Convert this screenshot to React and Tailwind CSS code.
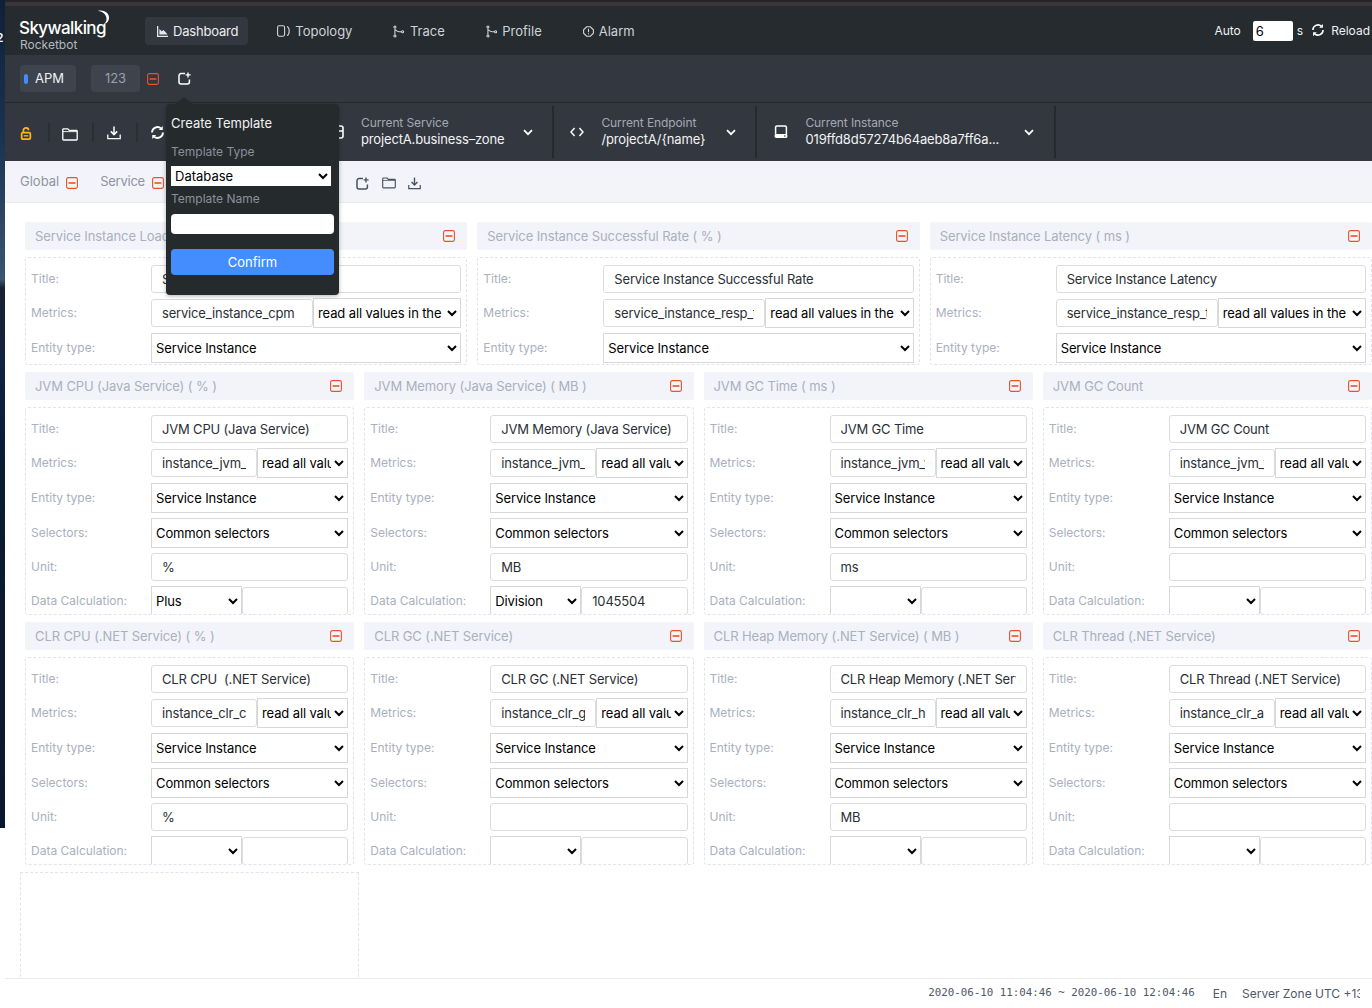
// App.jsx
import React from "react";

const ACTIVE_READ = "read all values in the duration";

function card(title, unit, inputTitle, metric, extra) {
  return { title, unit, inputTitle, metric, ...extra };
}

const TOP_CARDS = [
  { title: "Service Instance Load ( CPM )", inputTitle: "Service Instance Load", metric: "service_instance_cpm" },
  { title: "Service Instance Successful Rate ( % )", inputTitle: "Service Instance Successful Rate", metric: "service_instance_resp_time" },
  { title: "Service Instance Latency ( ms )", inputTitle: "Service Instance Latency", metric: "service_instance_resp_time" },
];

const GRID_CARDS = [
  card("JVM CPU (Java Service) ( % )", "%", "JVM CPU (Java Service)", "instance_jvm_cpu", { calc: "Plus" }),
  card("JVM Memory (Java Service) ( MB )", "MB", "JVM Memory (Java Service)", "instance_jvm_memory_heap", { calc: "Division", calcValue: "1045504" }),
  card("JVM GC Time ( ms )", "ms", "JVM GC Time", "instance_jvm_young_gc_time"),
  card("JVM GC Count", "", "JVM GC Count", "instance_jvm_young_gc_count"),
  card("CLR CPU (.NET Service) ( % )", "%", "CLR CPU  (.NET Service)", "instance_clr_cpu"),
  card("CLR GC (.NET Service)", "", "CLR GC (.NET Service)", "instance_clr_gc_count"),
  card("CLR Heap Memory (.NET Service) ( MB )", "MB", "CLR Heap Memory (.NET Service)", "instance_clr_heap_memory"),
  card("CLR Thread (.NET Service)", "", "CLR Thread (.NET Service)", "instance_clr_available_worker_threads"),
];

function DeleteIcon() {
  return (
    <svg width="12" height="12" viewBox="0 0 12 12" fill="none" className="shrink-0">
      <rect x="0.6" y="0.6" width="10.8" height="10.8" rx="1.6" stroke="#e8532b" strokeWidth="1.1" />
      <path d="M2.6 6h6.8" stroke="#e8532b" strokeWidth="1.6" />
    </svg>
  );
}

function AddIcon({ color = "#fff" }) {
  return (
    <svg width="13" height="13" viewBox="0 0 13 13" fill="none" className="shrink-0">
      <path d="M7 1.6H3A2 2 0 0 0 1 3.6v6.4a2 2 0 0 0 2 2h6.4a2 2 0 0 0 2-2V7.4" stroke={color} strokeWidth="1.5" />
      <path d="M10 .4v5M7.6 2.9h5" stroke={color} strokeWidth="1.4" />
    </svg>
  );
}

function FolderIcon({ color = "#fff", w = 16, h = 13 }) {
  return (
    <svg width={w} height={h} viewBox="0 0 16 13" fill="none" className="shrink-0">
      <path d="M.8 11.2V1.6c0-.4.3-.8.8-.8h4.2l1.5 1.6h7.1c.4 0 .8.4.8.8v8c0 .4-.4.8-.8.8H1.6a.8.8 0 0 1-.8-.8Z" stroke={color} strokeWidth="1.3" />
      <path d="M1 3.6h14" stroke={color} strokeWidth="0.9" />
    </svg>
  );
}

function DownloadIcon({ color = "#fff", size = 14 }) {
  return (
    <svg width={size} height={size} viewBox="0 0 14 14" fill="none" className="shrink-0">
      <path d="M7 .6v7.6" stroke={color} strokeWidth="1.5" />
      <path d="M3.8 5.4 7 8.6l3.2-3.2" stroke={color} strokeWidth="1.5" />
      <path d="M.8 8.6v4h12.4v-4" stroke={color} strokeWidth="1.3" />
    </svg>
  );
}

function RefreshIcon({ size = 15, stroke = 2 }) {
  return (
    <svg width={size} height={size} viewBox="0 0 16 16" fill="none" className="shrink-0">
      <path d="M2.2 8a5.8 5.8 0 0 1 9.6-4.4" stroke="#fff" strokeWidth={stroke} />
      <path d="M13.8 8a5.8 5.8 0 0 1-9.6 4.4" stroke="#fff" strokeWidth={stroke} />
      <path d="M13.6 1v4.4H9.4zM2.4 15v-4.4h4.2z" fill="#fff" />
    </svg>
  );
}

function Chevron() {
  return (
    <svg width="10" height="7" viewBox="0 0 10 7" fill="none" className="shrink-0">
      <path d="M1 1.2 5 5.2l4-4" stroke="#fff" strokeWidth="1.7" />
    </svg>
  );
}

function ChartIcon() {
  return (
    <svg width="11" height="11" viewBox="0 0 11 11" fill="#e5e7ea" className="shrink-0">
      <path d="M0 0h1.3v9.7H11V11H0z" />
      <path d="M2.4 8.6V3l2.4 2.2L6.6 4 10.6 8.6z" />
    </svg>
  );
}

function TopologyIcon() {
  return (
    <svg width="13" height="12" viewBox="0 0 13 12" fill="none" stroke="#d4d7dc" strokeWidth="1.1" className="shrink-0">
      <rect x="0.6" y="0.8" width="7" height="10.4" rx="1.6" />
      <path d="M10 1.4c1.6.6 2.2 2.4 2.2 4.6s-.6 4-2.2 4.6" />
    </svg>
  );
}

function TraceIcon() {
  return (
    <svg width="11.5" height="13" viewBox="0 0 12 13" fill="none" stroke="#d4d7dc" strokeWidth="1.1" className="shrink-0">
      <circle cx="2" cy="1.8" r="1.1" />
      <circle cx="2" cy="11.2" r="1.1" />
      <circle cx="10" cy="6.8" r="1.1" />
      <path d="M2 3v7M2.6 4.6c1 1.6 3 2.2 6.2 2.2" />
    </svg>
  );
}

function AlarmIcon() {
  return (
    <svg width="11" height="11" viewBox="0 0 11 11" fill="none" stroke="#d4d7dc" strokeWidth="1.1" className="shrink-0">
      <path d="M3.6.8h3.8l3 3v3.4l-3 3H3.6l-3-3V3.8z" />
      <path d="M5.5 2.8v3.4M5.5 7.2v1.1" />
    </svg>
  );
}

function NavItem({ icon, label, active }) {
  return (
    <div className={`flex h-[28px] items-center gap-[5px] rounded pl-3 ${active ? "bg-[#333840] pr-[10px] text-[#eceef0]" : "pr-3 text-[#cfd3d8]"}`}>
      {icon}
      <span className={`pt-px text-[13px] ${active ? "tracking-[-0.2px]" : ""}`}>{label}</span>
    </div>
  );
}

function Current({ icon, label, value, width, iconGap, chevronClass }) {
  return (
    <div className={`flex h-[52px] items-center border-r-2 border-[#252a2e] ${width}`}>
      <div className={iconGap}>{icon}</div>
      <div className="ml-[17px] min-w-0 pb-[2px] leading-[16px]">
        <div className="text-[12px] tracking-[-0.1px] text-[#a3a9b2]">{label}</div>
        <div className="whitespace-nowrap text-[13px] tracking-[-0.15px] text-[#f2f3f4]">{value}</div>
      </div>
      <div className={chevronClass}>
        <Chevron />
      </div>
    </div>
  );
}

function Label({ children }) {
  return <div className="w-[120px] shrink-0 text-[12px] text-[#a9b0be]">{children}</div>;
}

function TextBox({ value, className }) {
  return (
    <input
      readOnly
      value={value}
      className={`h-[28px] rounded-[3px] border border-[#dcdcdc] bg-white px-[10px] text-[13px] tracking-[-0.18px] text-[#2b2f36] outline-none ${className}`}
    />
  );
}

function Picker({ value, className }) {
  return (
    <select
      value={value}
      onChange={() => {}}
      className={`h-[30px] border border-[#d8d8d8] bg-white text-[13px] tracking-[-0.12px] text-black outline-none ${className}`}
    >
      <option value={value}>{value}</option>
    </select>
  );
}

function MetricCard({ item, wide }) {
  return (
    <div className={`shrink-0 px-[5px] ${wide ? "w-1/3" : "w-1/4"}`}>
      <div className="mb-[7px] flex h-[28px] items-center justify-between rounded-[2px] bg-[#f3f4f9] pl-[10px] pr-[12px]">
        <span className="whitespace-nowrap pt-px text-[13px] tracking-[-0.1px] text-[#a9b0be]">{item.title}</span>
        <DeleteIcon />
      </div>
      <div className={`mb-[7px] overflow-hidden rounded-[3px] border border-dashed border-[#e2e3ee] pl-[5px] pr-[5px] pt-[7px] ${wide ? "h-[108px]" : "h-[208px]"}`}>
        <div className="mb-[5px] flex items-center">
          <Label>Title:</Label>
          <TextBox value={item.inputTitle} className="min-w-0 flex-1" />
        </div>
        <div className="mb-[5px] flex items-center">
          <Label>Metrics:</Label>
          <TextBox value={item.metric} className={`shrink-0 ${wide ? "w-[162px]" : "w-[106px]"}`} />
          <Picker value={ACTIVE_READ} className="min-w-0 flex-1" />
        </div>
        <div className="mb-[5px] flex items-center">
          <Label>Entity type:</Label>
          <Picker value="Service Instance" className="min-w-0 flex-1" />
        </div>
        {!wide && (
          <>
            <div className="mb-[5px] flex items-center">
              <Label>Selectors:</Label>
              <Picker value="Common selectors" className="min-w-0 flex-1" />
            </div>
            <div className="mb-[5px] flex items-center">
              <Label>Unit:</Label>
              <TextBox value={item.unit} className="min-w-0 flex-1" />
            </div>
            <div className="flex items-center">
              <Label>Data Calculation:</Label>
              <Picker value={item.calc || ""} className="w-[91px] shrink-0" />
              <TextBox value={item.calcValue || ""} className="min-w-0 flex-1" />
            </div>
          </>
        )}
      </div>
    </div>
  );
}

export default function App() {
  return (
    <div className="flex h-[1008px] w-[1372px] overflow-hidden bg-white font-['Inter',sans-serif]">
      {/* desktop peeking through on the left */}
      <div className="relative h-[828px] w-[5px] shrink-0 overflow-hidden bg-[linear-gradient(180deg,#0f2038_0px,#1b3353_140px,#3a5570_280px,#1a2030_288px,#12223f_360px,#0b1a33_470px,#0a1730_828px)]">
        <span className="absolute left-[-4px] top-[29px] text-[12px] font-semibold text-white">2</span>
      </div>

      <div className="relative flex min-w-0 flex-1 flex-col">
        <div className="h-[2px] bg-[#262328]" />
        <div className="h-[4px] bg-[#3a3539]" />

        {/* top nav */}
        <header className="flex h-[49px] items-center bg-[#252b2e] pt-px text-white">
          <div className="relative ml-[14px] w-[126px] shrink-0 pt-[7px]">
            <div className="text-[17px] font-medium leading-[20px] tracking-[-0.6px] text-white">Skywalking</div>
            <svg width="13" height="15" viewBox="0 0 14 16" className="absolute left-[78px] top-[-1px]" fill="#fff">
              <path d="M1 .8c6-1.6 12 1.8 12 7.4 0 3.6-2.6 6.4-6 7.2 2.4-1.8 3.4-4 3.2-6.4C10 5 6.4 1.6 1 .8Z" />
            </svg>
            <div className="pl-px text-[12px] leading-[14px] text-[#b4b9bf]">Rocketbot</div>
          </div>
          <nav className="flex items-center gap-[17px]">
            <NavItem icon={<ChartIcon />} label="Dashboard" active />
            <NavItem icon={<TopologyIcon />} label="Topology" />
            <NavItem icon={<TraceIcon />} label="Trace" />
            <NavItem icon={<TraceIcon />} label="Profile" />
            <NavItem icon={<AlarmIcon />} label="Alarm" />
          </nav>
          <div className="ml-auto flex items-center pr-[2px] text-[12px] text-[#f0f1f2]">
            <span>Auto</span>
            <input readOnly value="6" className="ml-[12px] h-[20px] w-[40px] rounded-[2px] bg-white px-[3px] text-[13px] text-black outline-none" />
            <span className="ml-[4px]">s</span>
            <span className="mb-[3px] ml-[8px] mr-[6px]">
              <RefreshIcon size={14} stroke={1.8} />
            </span>
            <span>Reload</span>
          </div>
        </header>

        {/* dashboard tabs */}
        <div className="flex h-[48px] items-center border-b border-[#23282c] bg-[#333840] pl-[15px]">
          <div className="flex h-[27px] w-[56px] items-center rounded bg-[#3d444e] pl-[4px]">
            <span className="h-[10px] w-[4px] rounded-[2px] bg-[#448dfe]" />
            <span className="ml-[7px] text-[13px] text-[#f0f1f2]">APM</span>
          </div>
          <div className="ml-[15px] flex h-[27px] w-[49px] items-center justify-center rounded bg-[#3d444e] text-[13px] text-[#9aa0a9]">123</div>
          <span className="ml-[7px]">
            <DeleteIcon />
          </span>
          <span className="ml-[19px]">
            <AddIcon />
          </span>
        </div>

        {/* tool bar + current selectors */}
        <div className="flex h-[58px] items-center bg-[#333840] pl-[15px]">
          <svg width="12" height="13" viewBox="0 0 12 15" fill="none" stroke="#fdb813" strokeWidth="2" className="mt-[2px] shrink-0">
            <path d="M3 6V3.8C3 2.2 4.3 1 6 1s3 1.2 3 2.8" />
            <rect x="1" y="6.4" width="10" height="7.6" rx="1.4" />
            <path d="M3.4 10.2h5.2" strokeWidth="1.6" />
          </svg>
          <div className="ml-[16px] h-[19px] w-[2px] bg-[#2a2f34]" />
          <span className="ml-[12px] mt-[4px]">
            <FolderIcon />
          </span>
          <div className="ml-[14px] h-[19px] w-[2px] bg-[#2a2f34]" />
          <span className="ml-[13px] mt-px">
            <DownloadIcon />
          </span>
          <div className="ml-[15px] h-[19px] w-[2px] bg-[#2a2f34]" />
          <span className="ml-[12px] mt-px">
            <RefreshIcon />
          </span>
          <div className="ml-[165px] shrink-0">
            <svg width="14" height="14" viewBox="0 0 14 14" fill="none" stroke="#fff" strokeWidth="1.6">
              <rect x="1" y="1" width="12" height="12" rx="2" />
              <path d="M1 6h12" />
            </svg>
          </div>
          <div className="ml-[17px] pb-[2px] leading-[16px]">
            <div className="text-[12px] tracking-[-0.1px] text-[#a3a9b2]">Current Service</div>
            <div className="whitespace-nowrap text-[13px] tracking-[-0.15px] text-[#f2f3f4]">projectA.business–zone</div>
          </div>
          <div className="ml-[19px] mr-[19px] mt-px">
            <Chevron />
          </div>
          <div className="h-[52px] w-[2px] bg-[#252a2e]" />
          <Current
            width="w-[203px]"
            label="Current Endpoint"
            value="/projectA/{name}"
            iconGap="ml-[16px]"
            chevronClass="ml-[21px] mt-px"
            icon={
              <svg width="14" height="10" viewBox="0 0 14 10" fill="none" stroke="#fff" strokeWidth="1.4">
                <path d="M4.6 1 1 5l3.6 4M9.4 1 13 5l-3.6 4" />
              </svg>
            }
          />
          <Current
            width="w-[299px]"
            label="Current Instance"
            value="019ffd8d57274b64aeb8a7ff6a..."
            iconGap="ml-[17px]"
            chevronClass="ml-[25px] mt-px"
            icon={
              <svg width="14" height="14" viewBox="0 0 14 14" fill="none" stroke="#fff" strokeWidth="1.5">
                <path d="M1.6 9V2.4C1.6 1.6 2.2 1 3 1h8c.8 0 1.4.6 1.4 1.4V9" />
                <rect x="0.6" y="9" width="12.8" height="4" rx="1.4" fill="#fff" stroke="none" />
                <circle cx="10.8" cy="11" r="0.8" fill="#333840" stroke="none" />
              </svg>
            }
          />
        </div>

        {/* template tabs */}
        <div className="flex h-[42px] shrink-0 items-center border-b border-[#e9eaf0] bg-[#f3f4f9] pl-[15px] text-[13px] text-[#8e95a3]">
          <span>Global</span>
          <span className="ml-[7px] mt-[3px]">
            <DeleteIcon />
          </span>
          <span className="ml-[22px] tracking-[-0.25px]">Service</span>
          <span className="ml-[7px] mt-[3px]">
            <DeleteIcon />
          </span>
          <span className="ml-[192px] mt-[3px]">
            <AddIcon color="#4a5160" />
          </span>
          <span className="ml-[13px] mt-[3px]">
            <FolderIcon color="#4a5160" w={14} h={12} />
          </span>
          <span className="ml-[12px] mt-[3px]">
            <DownloadIcon color="#4a5160" size={13} />
          </span>
        </div>

        {/* charts config */}
        <main className="min-h-0 flex-1 overflow-hidden pl-[15px] pt-[19px]">
          <div className="flex w-[1357px] flex-wrap">
            {TOP_CARDS.map((c) => (
              <MetricCard key={c.title} item={c} wide />
            ))}
            {GRID_CARDS.map((c) => (
              <MetricCard key={c.title} item={c} />
            ))}
            <div className="h-[120px] w-1/4 border border-dashed border-[#e2e3ee]" />
          </div>
        </main>

        <footer className="flex h-[30px] shrink-0 items-center justify-end overflow-hidden border-t border-[#e9eaf0] bg-white pr-[12px] text-[12px] text-[#4f5868]">
          <span className="whitespace-nowrap font-['DejaVu_Sans_Mono',monospace] text-[10.8px]">2020-06-10 11:04:46 ~ 2020-06-10 12:04:46</span>
          <span className="ml-[18px]">En</span>
          <span className="ml-[15px] w-[118px] shrink-0 overflow-hidden whitespace-nowrap">Server Zone UTC +13</span>
        </footer>

        {/* create template popover */}
        <div className="absolute left-[161px] top-[104px] h-[191px] w-[173px] rounded bg-[#252a2d] px-[5px] pt-[11px] shadow-[0_1px_4px_rgba(0,0,0,0.3)]">
          <div className="absolute left-[10px] top-[-7px] h-0 w-0 border-x-[8px] border-b-[7px] border-x-transparent border-b-[#252a2d]" />
          <div className="text-[13px] leading-[16px] text-[#f0f1f2]">Create Template</div>
          <div className="mt-[13px] text-[12px] leading-[16px] text-[#8b919a]">Template Type</div>
          <select value="Database" onChange={() => {}} className="mt-[6px] block h-[20px] w-[160px] bg-white text-[13px] text-black outline-none">
            <option value="Database">Database</option>
          </select>
          <div className="mt-[5px] text-[12px] leading-[16px] text-[#8b919a]">Template Name</div>
          <input readOnly className="mt-[7px] block h-[20px] w-[163px] rounded bg-white outline-none" />
          <button type="button" className="mt-[15px] block h-[26px] w-[163px] rounded bg-[#448dfe] pt-px text-[13px] text-white">
            Confirm
          </button>
        </div>
      </div>
    </div>
  );
}
